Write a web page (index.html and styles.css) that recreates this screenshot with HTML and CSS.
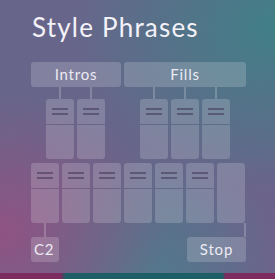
FILE: index.html
```html
<!DOCTYPE html>
<html>
<head>
  <meta charset="UTF-8">
  <title>Style Phrases</title>
  <link rel="stylesheet" href="styles.css">
</head>
<body>
  <div class="panel">
    <h1>Style Phrases</h1>

    <div class="labels">
      <div class="tag intros">Intros</div>
      <div class="tag fills">Fills</div>
    </div>

    <div class="upper">
      <div class="group first">
        <div class="col"><div class="stub"></div><div class="key"><div class="head"><i></i><i></i></div><div class="body"></div></div></div>
        <div class="col"><div class="stub"></div><div class="key"><div class="head"><i></i><i></i></div><div class="body"></div></div></div>
      </div>
      <div class="group second">
        <div class="col"><div class="stub"></div><div class="key"><div class="head"><i></i><i></i></div><div class="body"></div></div></div>
        <div class="col"><div class="stub"></div><div class="key"><div class="head"><i></i><i></i></div><div class="body"></div></div></div>
        <div class="col"><div class="stub"></div><div class="key"><div class="head"><i></i><i></i></div><div class="body"></div></div></div>
      </div>
    </div>

    <div class="lower">
      <div class="key"><div class="head"><i></i><i></i></div><div class="body"></div></div>
      <div class="key"><div class="head"><i></i><i></i></div><div class="body"></div></div>
      <div class="key"><div class="head"><i></i><i></i></div><div class="body"></div></div>
      <div class="key"><div class="head"><i></i><i></i></div><div class="body"></div></div>
      <div class="key"><div class="head"><i></i><i></i></div><div class="body"></div></div>
      <div class="key"><div class="head"><i></i><i></i></div><div class="body"></div></div>
      <div class="key plain"></div>
    </div>

    <div class="stubs">
      <div class="stub"></div>
      <div class="stub"></div>
    </div>

    <div class="footer">
      <div class="tag c2">C2</div>
      <div class="tag stop">Stop</div>
    </div>
  </div>
  <div class="strip"></div>
</body>
</html>
```

FILE: styles.css
```css
body {
  margin: 0;
  width: 275px;
  height: 279px;
  overflow: hidden;
  font-family: Lato, 'Open Sans', sans-serif;
  color: #eceaf2;
}
.panel {
  height: 273px;
  box-sizing: border-box;
  padding: 0 0 0 31px;
  background:
    radial-gradient(ellipse 170px 140px at 0% 85%, rgba(150, 80, 130, 0.85), rgba(150, 80, 130, 0) 100%),
    radial-gradient(ellipse 200px 160px at 100% 10%, rgba(60, 130, 135, 0.9), rgba(60, 130, 135, 0) 100%),
    radial-gradient(ellipse 140px 120px at 55% 100%, rgba(75, 125, 140, 0.8), rgba(75, 125, 140, 0) 100%),
    radial-gradient(ellipse 110px 120px at 100% 95%, rgba(115, 95, 140, 0.8), rgba(115, 95, 140, 0) 100%),
    #67668a;
}
h1 {
  margin: 0;
  padding: 12px 0 0 1px;
  height: 50px;
  box-sizing: border-box;
  font-size: 26px;
  font-weight: 400;
  line-height: 30px;
  letter-spacing: 1.2px;
  color: #f4f2f8;
}
.labels {
  display: flex;
  gap: 3px;
  margin-top: 12px;
}
.tag {
  height: 25px;
  line-height: 25px;
  border-radius: 3px;
  background-color: rgba(255, 255, 255, 0.18);
  font-size: 15px;
  letter-spacing: 0.8px;
  text-align: center;
}
.intros {
  width: 90px;
}
.fills {
  width: 122px;
}
.upper {
  display: flex;
}
.group {
  display: flex;
  gap: 3px;
}
.group.first {
  margin-left: 15px;
}
.group.second {
  margin-left: 35px;
}
.col {
  display: flex;
  flex-direction: column;
  align-items: center;
}
.stub {
  width: 2px;
  height: 12px;
  background-color: rgba(255, 255, 255, 0.2);
}
.key {
  width: 28px;
  height: 60px;
  display: flex;
  flex-direction: column;
  gap: 1px;
}
.head {
  height: 25px;
  border-radius: 3px 3px 0 0;
  background-color: rgba(255, 255, 255, 0.18);
  display: flex;
  flex-direction: column;
  align-items: center;
  padding-top: 9px;
  box-sizing: border-box;
  gap: 3px;
}
.head i {
  display: block;
  width: 16px;
  height: 2px;
  background-color: rgba(55, 45, 75, 0.5);
}
.body {
  flex: 1;
  border-radius: 0 0 3px 3px;
  background-color: rgba(255, 255, 255, 0.18);
}
.key.plain {
  border-radius: 3px;
  background-color: rgba(255, 255, 255, 0.18);
}
.lower {
  display: flex;
  gap: 3px;
  margin-top: 4px;
}
.stubs {
  display: flex;
  justify-content: space-between;
  width: 202px;
  padding-left: 13px;
}
.stubs .stub {
  height: 14px;
}
.footer {
  display: flex;
  justify-content: space-between;
  width: 215px;
}
.c2 {
  width: 28px;
  text-align: left;
  padding-left: 3px;
  box-sizing: border-box;
}
.stop {
  width: 59px;
}
.strip {
  height: 6px;
  background: linear-gradient(to right, #7c2c5e 0, #7c2c5e 22%, #1e5f67 24%, #1e5f67 81%, #7c2c5e 82%, #7c2c5e 100%);
}
```
